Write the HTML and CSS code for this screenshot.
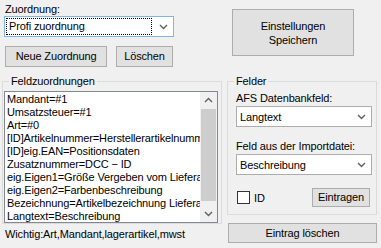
FILE: index.html
```html
<!DOCTYPE html>
<html lang="de">
<head>
  <meta charset="UTF-8" />
  <title>Zuordnung</title>
  <link rel="stylesheet" href="styles.css">
</head>
<body>
  <div class="window">
    <div class="col-left">
      <div class="caption">Zuordnung:</div>
      <div class="combo combo-active">
        <span class="combo-text"><span class="focus">Profi zuordnung</span></span>
        <svg class="arrow" width="17" height="19" viewBox="0 0 17 19"><path d="M5 8 L8.5 11.5 L12 8" fill="none" stroke="#606060" stroke-width="1.4"/></svg>
      </div>
      <div class="btn-row">
        <button class="btn btn-new">Neue Zuordnung</button>
        <button class="btn btn-del">Löschen</button>
      </div>
      <fieldset class="group group-map">
        <legend>Feldzuordnungen</legend>
        <div class="listbox">
          <ul class="items">
            <li>Mandant=#1</li>
            <li>Umsatzsteuer=#1</li>
            <li>Art=#0</li>
            <li>[ID]Artikelnummer=Herstellerartikelnummer</li>
            <li>[ID]eig.EAN=Positionsdaten</li>
            <li>Zusatznummer=DCC − ID</li>
            <li>eig.Eigen1=Größe Vergeben vom Lieferant</li>
            <li>eig.Eigen2=Farbenbeschreibung</li>
            <li>Bezeichnung=Artikelbezeichnung Lieferant</li>
            <li>Langtext=Beschreibung</li>
          </ul>
          <div class="scrollbar">
            <svg class="scroll-btn" width="17" height="17" viewBox="0 0 17 17"><path d="M5 10 L8.5 6.5 L12 10" fill="none" stroke="#606060" stroke-width="1.4"/></svg>
            <div class="track"><div class="thumb"></div></div>
            <svg class="scroll-btn" width="17" height="17" viewBox="0 0 17 17"><path d="M5 7 L8.5 10.5 L12 7" fill="none" stroke="#606060" stroke-width="1.4"/></svg>
          </div>
        </div>
      </fieldset>
      <div class="hint">Wichtig:Art,Mandant,lagerartikel,mwst</div>
    </div>

    <div class="col-right">
      <button class="btn btn-save">Einstellungen<br>Speichern</button>
      <fieldset class="group group-fields">
        <legend>Felder</legend>
        <div class="field-label">AFS Datenbankfeld:</div>
        <div class="combo">
          <span class="combo-text">Langtext</span>
          <svg class="arrow" width="17" height="19" viewBox="0 0 17 19"><path d="M5 8 L8.5 11.5 L12 8" fill="none" stroke="#606060" stroke-width="1.4"/></svg>
        </div>
        <div class="field-label second">Feld aus der Importdatei:</div>
        <div class="combo">
          <span class="combo-text">Beschreibung</span>
          <svg class="arrow" width="17" height="19" viewBox="0 0 17 19"><path d="M5 8 L8.5 11.5 L12 8" fill="none" stroke="#606060" stroke-width="1.4"/></svg>
        </div>
        <div class="entry-row">
          <label class="check"><span class="box"></span>ID</label>
          <button class="btn btn-enter">Eintragen</button>
        </div>
      </fieldset>
      <button class="btn btn-remove">Eintrag löschen</button>
    </div>
  </div>
</body>
</html>
```

FILE: styles.css
```css
html, body {
  margin: 0;
  padding: 0;
}
body {
  width: 381px;
  height: 248px;
  overflow: hidden;
  background-color: #f0f0f0;
  font-family: 'Liberation Sans', Arial, sans-serif;
  font-size: 11px;
  letter-spacing: -0.13px;
  color: #000;
}
.window {
  display: flex;
}
.col-left {
  width: 222px;
  padding-left: 2px;
  box-sizing: border-box;
}
.col-right {
  width: 150px;
  margin-left: 5px;
}
.caption {
  margin: 2px 0 0 3px;
  line-height: 14px;
}

/* combo boxes */
.combo {
  display: flex;
  align-items: center;
  height: 21px;
  box-sizing: border-box;
  border: 1px solid #acacac;
  background: #fff;
}
.combo-active {
  width: 170px;
  margin-left: 2px;
  border-color: #7eb4ea;
}
.combo-text {
  flex: 1;
  padding-left: 3px;
  white-space: nowrap;
}
.combo-active .combo-text {
  padding-left: 1px;
}
.focus {
  display: block;
  width: 146px;
  height: 17px;
  line-height: 15px;
  box-sizing: border-box;
  padding-left: 2px;
  border: 1px dotted #000;
}
.arrow {
  flex: none;
  margin-right: 1px;
}

/* buttons */
.btn {
  font-family: 'Liberation Sans', Arial, sans-serif;
  font-size: 11px;
  letter-spacing: -0.13px;
  color: #000;
  background: #e1e1e1;
  border: 1px solid #adadad;
  padding: 0;
  box-sizing: border-box;
  line-height: 13px;
}
.btn-row {
  display: flex;
  margin: 9px 0 0 3px;
}
.btn-new {
  width: 102px;
  height: 21px;
}
.btn-del {
  width: 57px;
  height: 21px;
  margin-left: 9px;
}
.btn-save {
  display: block;
  width: 122px;
  height: 47px;
  margin: 9px 0 0 5px;
  line-height: 14px;
}
.btn-remove {
  display: block;
  width: 149px;
  height: 20px;
  margin: 8px 0 0 1px;
}

/* group boxes */
.group {
  margin: 0;
  padding: 0;
  min-width: 0;
  border: 1px solid #dcdcdc;
}
.group legend {
  padding: 0 2px;
  line-height: 13px;
}
.group-map {
  margin-top: 8px;
  padding: 0 3px 0 1px;
  height: 149px;
  box-sizing: border-box;
}
.group-map legend {
  margin-left: 5px;
}
.group-fields {
  margin-top: 19px;
  padding: 0 4px 7px 8px;
}
.group-fields legend {
  margin-left: -2px;
}

/* list box */
.listbox {
  display: flex;
  margin-top: 3px;
  height: 132px;
  box-sizing: border-box;
  border: 1px solid #828790;
  background: #fff;
}
.items {
  flex: 1;
  margin: 0;
  padding: 1px 0 0 2px;
  list-style: none;
  overflow: hidden;
  white-space: nowrap;
}
.items li {
  line-height: 13px;
}
.scrollbar {
  flex: none;
  width: 17px;
  display: flex;
  flex-direction: column;
  background: #f0f0f0;
}
.scroll-btn {
  display: block;
}
.track {
  flex: 1;
}
.thumb {
  margin: 0 1px;
  height: 92px;
  background: #cdcdcd;
}
.hint {
  margin: 4px 0 0 3px;
  line-height: 13px;
}

/* Felder group */
.field-label {
  margin-top: 4px;
  margin-bottom: 1px;
  line-height: 13px;
}
.field-label.second {
  margin-top: 13px;
}
.entry-row {
  display: flex;
  align-items: center;
  margin-top: 13px;
  height: 19px;
}
.check {
  display: flex;
  align-items: center;
  flex: 1;
  margin-left: 1px;
}
.box {
  width: 13px;
  height: 13px;
  box-sizing: border-box;
  border: 1px solid #333;
  background: #fff;
  margin-right: 4px;
}
.btn-enter {
  width: 58px;
  height: 19px;
  margin-right: 2px;
}
```
